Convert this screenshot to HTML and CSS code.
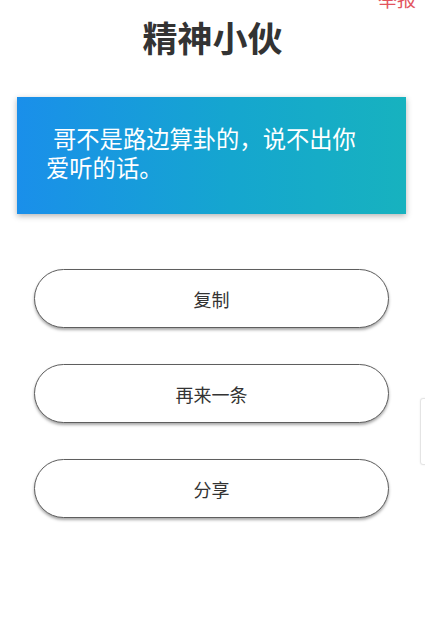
FILE: index.html
```html
<!DOCTYPE html>
<html lang="zh">
<head>
<meta charset="utf-8">
<title>精神小伙</title>
<link rel="stylesheet" href="styles.css">
</head>
<body>
<div class="page">
  <a class="report">举报</a>
  <h1 class="title">精神小伙</h1>
  <div class="card">
    <p class="quote">哥不是路边算卦的，说不出你爱听的话。</p>
  </div>
  <div class="actions">
    <button class="btn">复制</button>
    <button class="btn">再来一条</button>
    <button class="btn">分享</button>
  </div>
  <div class="side-tab"></div>
</div>
</body>
</html>
```

FILE: styles.css
```css
html, body {
  margin: 0;
  padding: 0;
  background: #ffffff;
}

body {
  font-family: "Noto Sans CJK SC", "Noto Sans", sans-serif;
  color: #333333;
}

.page {
  position: relative;
  width: 425px;
  min-height: 626px;
  overflow: hidden;
}

.report {
  position: absolute;
  top: -14px;
  right: 9px;
  font-size: 19px;
  line-height: 26px;
  color: #e2545e;
}

.title {
  margin: 0;
  padding-top: 13px;
  font-size: 35px;
  line-height: 48px;
  font-weight: 700;
  text-align: center;
  color: #333333;
}

.card {
  margin: 36px 19px 0 17px;
  height: 117px;
  box-sizing: border-box;
  padding: 27px 40px 0 29px;
  background: linear-gradient(90deg, #1a8fea 0%, #15a6cf 55%, #17b2bf 100%);
  box-shadow: 0 2px 6px rgba(0, 0, 0, 0.3);
}

.quote {
  margin: 0;
  font-size: 23.3px;
  line-height: 29px;
  color: #ffffff;
  text-indent: 7px;
}

.actions {
  display: flex;
  flex-direction: column;
  align-items: center;
  gap: 36px;
  margin-top: 55px;
  padding-right: 2px;
}

.btn {
  width: 355px;
  height: 59px;
  box-sizing: border-box;
  border: 1px solid #5e5e5e;
  border-radius: 30px;
  background: #ffffff;
  box-shadow: 0 2px 3px rgba(0, 0, 0, 0.35);
  font-family: "Noto Sans CJK SC", "Noto Sans", sans-serif;
  font-size: 18px;
  color: #333333;
  padding: 0;
}

.side-tab {
  position: absolute;
  left: 420px;
  top: 398px;
  width: 20px;
  height: 67px;
  box-sizing: border-box;
  border: 1px solid #e4e4e4;
  border-radius: 3px;
  background: #ffffff;
  box-shadow: 0 0 2px rgba(0, 0, 0, 0.08);
}
```
